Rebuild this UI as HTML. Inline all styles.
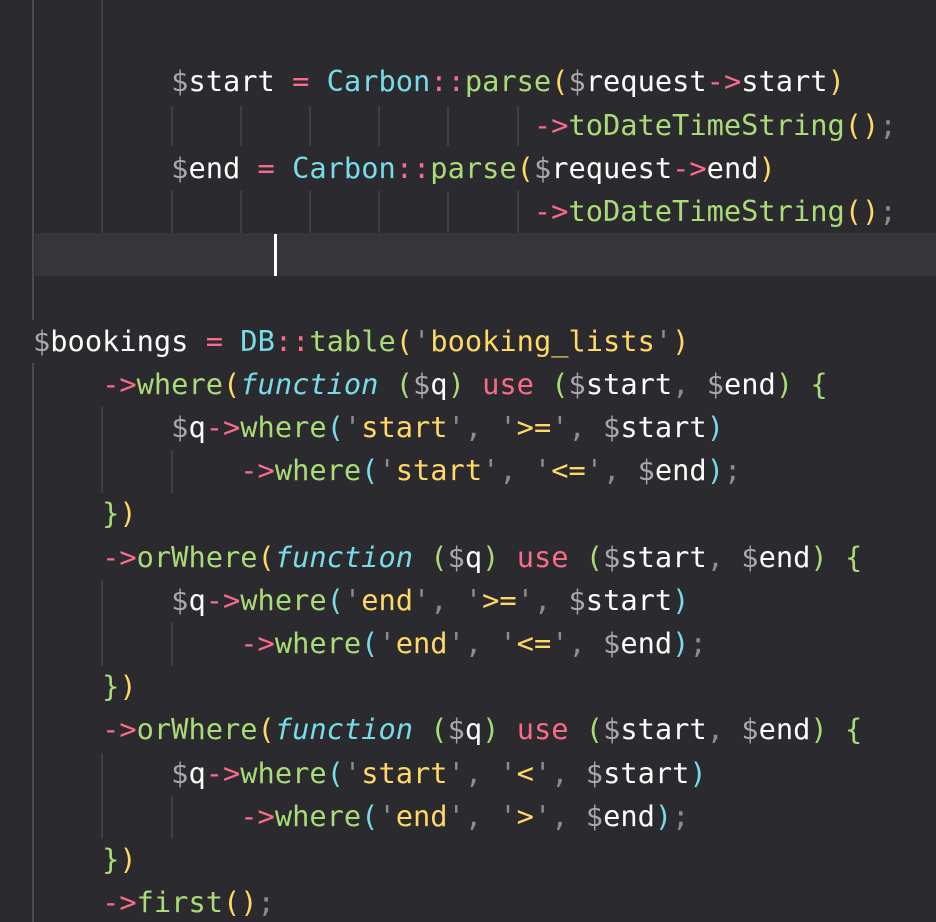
<!DOCTYPE html>
<html><head><meta charset="utf-8"><style>
html,body{margin:0;padding:0;background:#2b2a2e;width:936px;height:922px;overflow:hidden;position:relative}
pre{position:absolute;left:33px;top:60.4px;margin:0;font-family:"DejaVu Sans Mono","Liberation Mono",monospace;font-size:28.7px;line-height:43.2px;color:#fcfcfa}
.g{position:absolute;width:2px;background:#3f3e42}
.cl{position:absolute;left:35px;top:233.2px;width:901px;height:43.2px;background:#363539}
.cur{position:absolute;left:274px;top:234px;width:3px;height:42px;background:#fff}
.d{color:#a9a8a9}.r{color:#fc6a8a}.c{color:#78dce8}.gn{color:#a9dc76}.y{color:#ffd866}.p{color:#8d8c8e}
i{font-style:italic;color:#78dce8}
</style></head><body>
<div class="cl"></div>
<div class="g" style="left:32px;top:0;height:320px;background:#4b4a4e"></div>
<div class="g" style="left:32px;top:363px;height:560px;background:#4b4a4e"></div>
<div class="g" style="left:101px;top:0;height:233px"></div>
<div class="g" style="left:171px;top:106px;height:40px"></div><div class="g" style="left:240px;top:106px;height:40px"></div><div class="g" style="left:309px;top:106px;height:40px"></div><div class="g" style="left:378px;top:106px;height:40px"></div><div class="g" style="left:447px;top:106px;height:40px"></div><div class="g" style="left:517px;top:106px;height:40px"></div>
<div class="g" style="left:171px;top:191px;height:42px"></div><div class="g" style="left:240px;top:191px;height:42px"></div><div class="g" style="left:309px;top:191px;height:42px"></div><div class="g" style="left:378px;top:191px;height:42px"></div><div class="g" style="left:447px;top:191px;height:42px"></div><div class="g" style="left:517px;top:191px;height:42px"></div>
<div class="g" style="left:101px;top:407px;height:86px"></div><div class="g" style="left:171px;top:450px;height:43px"></div>
<div class="g" style="left:101px;top:580px;height:86px"></div><div class="g" style="left:171px;top:623px;height:43px"></div>
<div class="g" style="left:101px;top:753px;height:86px"></div><div class="g" style="left:171px;top:796px;height:43px"></div>
<div class="cur"></div>
<pre>        <span class="d">$</span>start <span class="r">=</span> <span class="c">Carbon</span><span class="r">::</span><span class="gn">parse</span><span class="y">(</span><span class="d">$</span>request<span class="r">-&gt;</span>start<span class="y">)</span>
                             <span class="r">-&gt;</span><span class="gn">toDateTimeString</span><span class="y">()</span><span class="p">;</span>
        <span class="d">$</span>end <span class="r">=</span> <span class="c">Carbon</span><span class="r">::</span><span class="gn">parse</span><span class="y">(</span><span class="d">$</span>request<span class="r">-&gt;</span>end<span class="y">)</span>
                             <span class="r">-&gt;</span><span class="gn">toDateTimeString</span><span class="y">()</span><span class="p">;</span>


<span class="d">$</span>bookings <span class="r">=</span> <span class="c">DB</span><span class="r">::</span><span class="gn">table</span><span class="y">(</span><span class="p">'</span><span class="y">booking_lists</span><span class="p">'</span><span class="y">)</span>
    <span class="r">-&gt;</span><span class="gn">where</span><span class="y">(</span><i>function</i> <span class="gn">(</span><span class="d">$</span>q<span class="gn">)</span> <span class="r">use</span> <span class="gn">(</span><span class="d">$</span>start<span class="p">,</span> <span class="d">$</span>end<span class="gn">)</span> <span class="gn">{</span>
        <span class="d">$</span>q<span class="r">-&gt;</span><span class="gn">where</span><span class="c">(</span><span class="p">'</span><span class="y">start</span><span class="p">',</span> <span class="p">'</span><span class="y">&gt;=</span><span class="p">',</span> <span class="d">$</span>start<span class="c">)</span>
            <span class="r">-&gt;</span><span class="gn">where</span><span class="c">(</span><span class="p">'</span><span class="y">start</span><span class="p">',</span> <span class="p">'</span><span class="y">&lt;=</span><span class="p">',</span> <span class="d">$</span>end<span class="c">)</span><span class="p">;</span>
    <span class="gn">}</span><span class="y">)</span>
    <span class="r">-&gt;</span><span class="gn">orWhere</span><span class="y">(</span><i>function</i> <span class="gn">(</span><span class="d">$</span>q<span class="gn">)</span> <span class="r">use</span> <span class="gn">(</span><span class="d">$</span>start<span class="p">,</span> <span class="d">$</span>end<span class="gn">)</span> <span class="gn">{</span>
        <span class="d">$</span>q<span class="r">-&gt;</span><span class="gn">where</span><span class="c">(</span><span class="p">'</span><span class="y">end</span><span class="p">',</span> <span class="p">'</span><span class="y">&gt;=</span><span class="p">',</span> <span class="d">$</span>start<span class="c">)</span>
            <span class="r">-&gt;</span><span class="gn">where</span><span class="c">(</span><span class="p">'</span><span class="y">end</span><span class="p">',</span> <span class="p">'</span><span class="y">&lt;=</span><span class="p">',</span> <span class="d">$</span>end<span class="c">)</span><span class="p">;</span>
    <span class="gn">}</span><span class="y">)</span>
    <span class="r">-&gt;</span><span class="gn">orWhere</span><span class="y">(</span><i>function</i> <span class="gn">(</span><span class="d">$</span>q<span class="gn">)</span> <span class="r">use</span> <span class="gn">(</span><span class="d">$</span>start<span class="p">,</span> <span class="d">$</span>end<span class="gn">)</span> <span class="gn">{</span>
        <span class="d">$</span>q<span class="r">-&gt;</span><span class="gn">where</span><span class="c">(</span><span class="p">'</span><span class="y">start</span><span class="p">',</span> <span class="p">'</span><span class="y">&lt;</span><span class="p">',</span> <span class="d">$</span>start<span class="c">)</span>
            <span class="r">-&gt;</span><span class="gn">where</span><span class="c">(</span><span class="p">'</span><span class="y">end</span><span class="p">',</span> <span class="p">'</span><span class="y">&gt;</span><span class="p">',</span> <span class="d">$</span>end<span class="c">)</span><span class="p">;</span>
    <span class="gn">}</span><span class="y">)</span>
    <span class="r">-&gt;</span><span class="gn">first</span><span class="y">()</span><span class="p">;</span></pre>
</body></html>
